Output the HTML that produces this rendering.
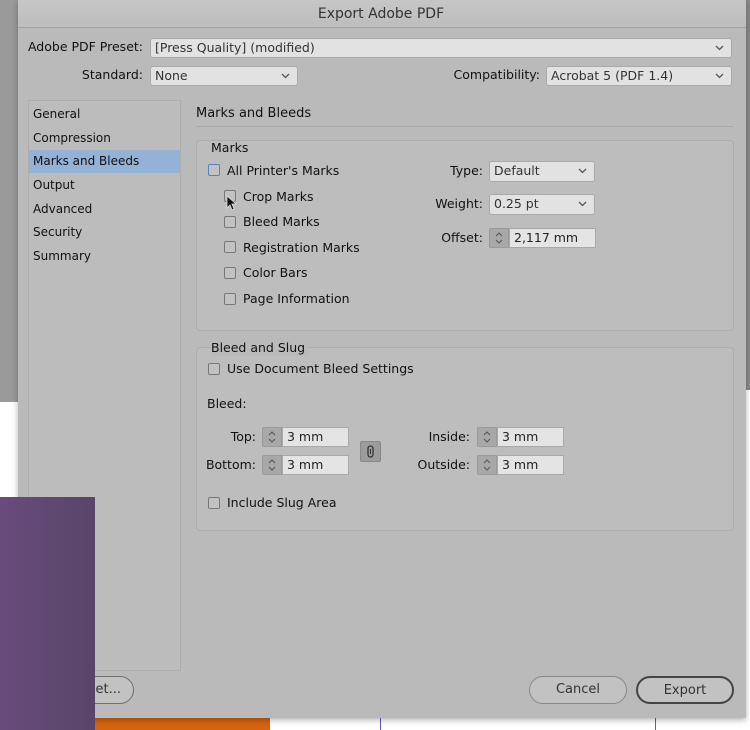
<!DOCTYPE html>
<html><head><meta charset="utf-8"><style>
*{margin:0;padding:0;box-sizing:border-box}
body{width:750px;height:730px;overflow:hidden;position:relative;background:#fff;font-family:"DejaVu Sans","Liberation Sans",sans-serif;font-size:12.5px;color:#111}
.a{position:absolute}
.lbl{position:absolute;text-align:right;white-space:nowrap;line-height:16px}
.t{position:absolute;white-space:nowrap;line-height:16px}
.sel{position:absolute;background:#e2e2e2;border:1px solid #a9a9a9;border-radius:3px;padding-left:4px;line-height:18px;color:#333;white-space:nowrap}
.sel svg{position:absolute;right:7px;top:6px}
.cb{position:absolute;width:12px;height:12px;border:1px solid #777;border-radius:2px;background:#c2c2c2}
.grp{position:absolute;border:1px solid #adadad;border-radius:4px;background:#bdbdbd}
.spin{position:absolute;width:20px;height:20px;background:#a8a8a8;border:1px solid #9a9a9a;border-radius:2px 0 0 2px}
.inp{position:absolute;height:20px;background:#e4e4e4;border:1px solid #a9a9a9;padding-left:4px;line-height:18px;color:#222}
.btn{position:absolute;height:28px;border:1.5px solid #6e6e6e;border-radius:14px;text-align:center;line-height:25px;color:#333;font-size:13px;background:#c2c2c2}
</style></head><body>
<div class="a" style="left:0;top:0;width:18px;height:402px;background:#9a9a9a"></div>
<div class="a" style="left:745px;top:0;width:5px;height:390px;background:#8a8a8a"></div>
<div class="a" style="left:95px;top:716px;width:175px;height:14px;background:#d6640f"></div>
<div class="a" style="left:380px;top:716px;width:1px;height:14px;background:#5560c0"></div>
<div class="a" style="left:655px;top:716px;width:1px;height:14px;background:#5560c0"></div>
<div class="a" style="left:18px;top:0;width:728px;height:718px;background:#bababa;box-shadow:0 2px 6px rgba(0,0,0,.3)">
 <div class="a" style="left:0;top:0;width:728px;height:28px;background:linear-gradient(#c6c6c6,#bdbdbd);border-bottom:1px solid #a5a5a5"></div>
</div>
<div class="t" style="left:0;width:762px;text-align:center;top:6px;font-size:14px;color:#333">Export Adobe PDF</div>

<div class="lbl" style="right:607px;top:39px">Adobe PDF Preset:</div>
<div class="sel" style="left:150px;top:38px;width:582px;height:20px">[Press Quality] (modified)<svg width="9" height="6"><path d="M1 1l3.5 3.5L8 1" stroke="#555" fill="none" stroke-width="1.3"/></svg></div>
<div class="lbl" style="right:607px;top:67px">Standard:</div>
<div class="sel" style="left:150px;top:66px;width:148px;height:20px">None<svg width="9" height="6"><path d="M1 1l3.5 3.5L8 1" stroke="#555" fill="none" stroke-width="1.3"/></svg></div>
<div class="lbl" style="right:210px;top:67px">Compatibility:</div>
<div class="sel" style="left:546px;top:66px;width:186px;height:20px">Acrobat 5 (PDF 1.4)<svg width="9" height="6"><path d="M1 1l3.5 3.5L8 1" stroke="#555" fill="none" stroke-width="1.3"/></svg></div>

<div class="a" style="left:28px;top:100px;width:153px;height:571px;border:1px solid #adadad;background:#bcbcbc"></div>
<div class="a" style="left:29px;top:150px;width:151px;height:23px;background:#94b2d6"></div>
<div class="t" style="left:33px;top:106px;font-size:12px">General</div>
<div class="t" style="left:33px;top:130px;font-size:12px">Compression</div>
<div class="t" style="left:33px;top:153px;font-size:12px">Marks and Bleeds</div>
<div class="t" style="left:33px;top:177px;font-size:12px">Output</div>
<div class="t" style="left:33px;top:201px;font-size:12px">Advanced</div>
<div class="t" style="left:33px;top:224px;font-size:12px">Security</div>
<div class="t" style="left:33px;top:248px;font-size:12px">Summary</div>

<div class="t" style="left:196px;top:106px;font-size:13px">Marks and Bleeds</div>
<div class="a" style="left:196px;top:126px;width:537px;height:1px;background:#a8a8a8"></div>

<div class="grp" style="left:196px;top:140px;width:538px;height:191px"></div>
<div class="t" style="left:211px;top:140px">Marks</div>
<div class="cb" style="left:208px;top:164px;border-color:#5a7fc0;border-width:1.5px"></div>
<div class="t" style="left:227px;top:163px">All Printer's Marks</div>
<div class="cb" style="left:224px;top:190px"></div><div class="t" style="left:243px;top:189px">Crop Marks</div>
<div class="cb" style="left:224px;top:216px"></div><div class="t" style="left:243px;top:214px">Bleed Marks</div>
<div class="cb" style="left:224px;top:241px"></div><div class="t" style="left:243px;top:240px">Registration Marks</div>
<div class="cb" style="left:224px;top:267px"></div><div class="t" style="left:243px;top:265px">Color Bars</div>
<div class="cb" style="left:224px;top:293px"></div><div class="t" style="left:243px;top:291px">Page Information</div>
<svg class="a" style="left:226px;top:195px" width="12" height="16"><path d="M1 1v12l3-3 2 5 2-1-2-5h4z" fill="#111" stroke="#ddd" stroke-width=".8"/></svg>

<div class="lbl" style="right:267px;top:163px">Type:</div>
<div class="sel" style="left:489px;top:161px;width:106px;height:21px">Default<svg width="9" height="6"><path d="M1 1l3.5 3.5L8 1" stroke="#555" fill="none" stroke-width="1.3"/></svg></div>
<div class="lbl" style="right:267px;top:196px">Weight:</div>
<div class="sel" style="left:489px;top:194px;width:106px;height:21px">0.25 pt<svg width="9" height="6"><path d="M1 1l3.5 3.5L8 1" stroke="#555" fill="none" stroke-width="1.3"/></svg></div>
<div class="lbl" style="right:267px;top:230px">Offset:</div>
<div class="spin" style="left:489px;top:228px"><svg width="18" height="18"><path d="M6 7l3-3 3 3M6 11l3 3 3-3" stroke="#555" fill="none"/></svg></div>
<div class="inp" style="left:509px;top:228px;width:87px">2,117 mm</div>

<div class="grp" style="left:196px;top:347px;width:538px;height:184px"></div>
<div class="t" style="left:211px;top:340px;background:#bababa;padding-right:3px">Bleed and Slug</div>
<div class="cb" style="left:208px;top:363px"></div><div class="t" style="left:227px;top:361px">Use Document Bleed Settings</div>
<div class="t" style="left:207px;top:396px">Bleed:</div>
<div class="lbl" style="right:494px;top:429px">Top:</div>
<div class="spin" style="left:262px;top:427px"><svg width="18" height="18"><path d="M6 7l3-3 3 3M6 11l3 3 3-3" stroke="#555" fill="none"/></svg></div>
<div class="inp" style="left:282px;top:427px;width:67px">3 mm</div>
<div class="lbl" style="right:494px;top:457px">Bottom:</div>
<div class="spin" style="left:262px;top:455px"><svg width="18" height="18"><path d="M6 7l3-3 3 3M6 11l3 3 3-3" stroke="#555" fill="none"/></svg></div>
<div class="inp" style="left:282px;top:455px;width:67px">3 mm</div>
<div class="a" style="left:360px;top:441px;width:21px;height:21px;background:#9c9c9c;border:1px solid #888;border-radius:2px"><svg width="19" height="19"><rect x="7" y="4" width="5" height="11" rx="2.5" stroke="#333" fill="none" stroke-width="1.3"/><path d="M9.5 7v5" stroke="#333"/></svg></div>
<div class="lbl" style="right:280px;top:429px">Inside:</div>
<div class="spin" style="left:477px;top:427px"><svg width="18" height="18"><path d="M6 7l3-3 3 3M6 11l3 3 3-3" stroke="#555" fill="none"/></svg></div>
<div class="inp" style="left:497px;top:427px;width:67px">3 mm</div>
<div class="lbl" style="right:280px;top:457px">Outside:</div>
<div class="spin" style="left:477px;top:455px"><svg width="18" height="18"><path d="M6 7l3-3 3 3M6 11l3 3 3-3" stroke="#555" fill="none"/></svg></div>
<div class="inp" style="left:497px;top:455px;width:67px">3 mm</div>
<div class="cb" style="left:208px;top:497px"></div><div class="t" style="left:227px;top:495px">Include Slug Area</div>

<div class="btn" style="left:40px;top:676px;width:94px;text-align:right;padding-right:12px">set...</div>
<div class="btn" style="left:529px;top:676px;width:98px;border-color:#888">Cancel</div>
<div class="btn" style="left:636px;top:676px;width:98px;border-width:2px;border-color:#444">Export</div>

<div class="a" style="left:0;top:497px;width:95px;height:233px;background:linear-gradient(90deg,#6a4a7c,#574668)"></div>
</body></html>
